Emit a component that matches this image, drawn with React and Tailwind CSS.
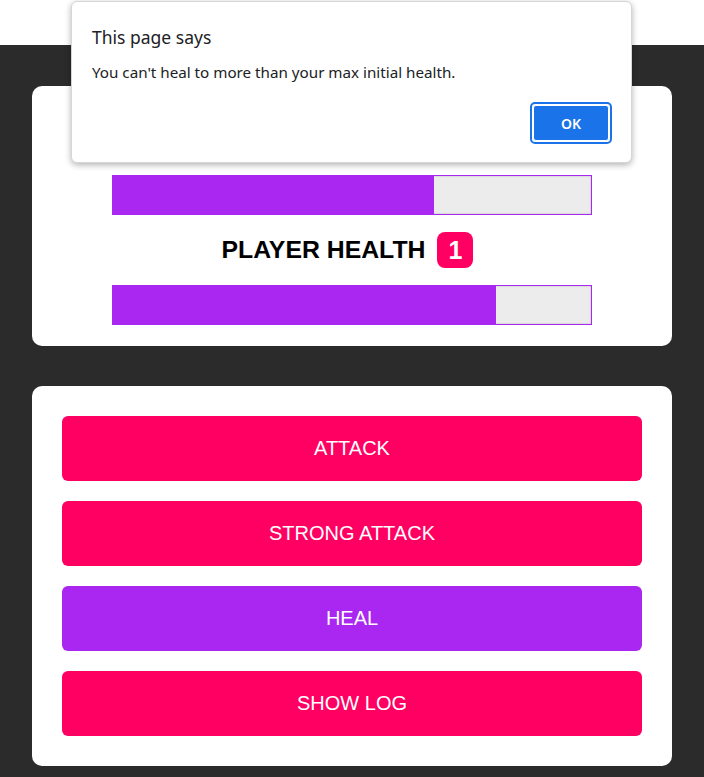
import React from "react";

function Bar({ pct }) {
  return (
    <div className="w-[480px] h-[40px] mx-auto border border-[#a927f0] bg-[#ececec] shadow-[inset_0_0_2px_rgba(0,0,0,0.25)] overflow-hidden">
      <div className="h-full bg-[#a927f0]" style={{ width: pct + "%" }} />
    </div>
  );
}

function Heading({ text, badge }) {
  return (
    <div className="h-[36px] flex items-center justify-center gap-[12px] pr-[9px]">
      <span className="text-[24.8px] font-bold text-black leading-none" style={{ fontFamily: '"Liberation Sans", Arial, sans-serif' }}>
        {text}
      </span>
      {badge !== undefined && (
        <span
          className="w-[36px] h-[36px] rounded-[8px] bg-[#ff0062] text-white text-[25px] font-bold flex items-center justify-center leading-none"
          style={{ fontFamily: '"Liberation Sans", Arial, sans-serif' }}
        >
          {badge}
        </span>
      )}
    </div>
  );
}

function Btn({ children, purple }) {
  return (
    <button
      className={
        "w-full h-[65px] rounded-[6px] text-white text-[20px] flex items-center justify-center pb-[2px] " +
        (purple ? "bg-[#a927f0]" : "bg-[#ff0062]")
      }
      style={{ fontFamily: '"Liberation Sans", Arial, sans-serif' }}
    >
      {children}
    </button>
  );
}

export default function App() {
  return (
    <div className="relative w-[704px] h-[777px] overflow-hidden bg-[#2b2b2b]">
      <div className="h-[45px] bg-white" />
      <div className="px-[32px] pt-[41px] flex flex-col gap-[40px]">
        <section className="bg-white rounded-[10px] pt-[36px] pb-[21px] flex flex-col gap-[17px]">
          <Heading text="MONSTER HEALTH" />
          <Bar pct={67.1} />
          <Heading text="PLAYER HEALTH" badge="1" />
          <Bar pct={80.2} />
        </section>
        <section className="bg-white rounded-[10px] p-[30px] flex flex-col gap-[20px]">
          <Btn>ATTACK</Btn>
          <Btn>STRONG ATTACK</Btn>
          <Btn purple>HEAL</Btn>
          <Btn>SHOW LOG</Btn>
        </section>
      </div>

      <div
        className="absolute left-[71px] top-[1px] w-[561px] h-[162px] bg-white rounded-[6px] border border-[#d6d6d6] shadow-[0_2px_6px_rgba(0,0,0,0.3)]"
        style={{ fontFamily: '"Noto Sans", "Open Sans", sans-serif' }}
      >
        <div className="pl-[20px] pt-[23px] text-[17.5px] leading-[24px] text-[#202124]">This page says</div>
        <div className="pl-[20px] pt-[13px] text-[15.2px] leading-[20px] text-[#202124]">
          You can't heal to more than your max initial health.
        </div>
        <div className="absolute right-[19px] bottom-[18px] w-[82px] h-[42px] rounded-[5px] border-2 border-[#1a73e8] p-[1px]">
          <div className="w-full h-full rounded-[3px] bg-[#1a73e8] border border-white flex items-center justify-center text-white text-[14px] font-semibold">
            OK
          </div>
        </div>
      </div>
    </div>
  );
}
